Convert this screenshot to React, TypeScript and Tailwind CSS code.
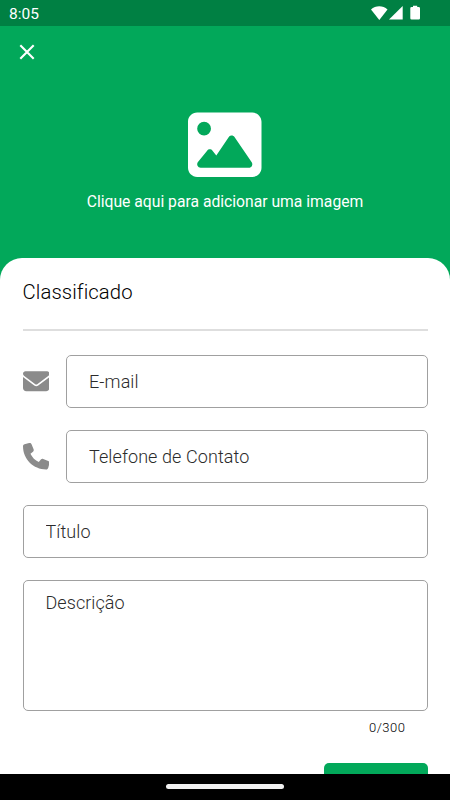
import { useState } from "react"
import type { ReactNode } from "react"
import clsx from "clsx"
import { FaEnvelope, FaImage, FaPhone } from "react-icons/fa6"

const MAX_DESCRIPTION = 300

function StatusBar() {
	return (
		<div className="flex h-[26px] shrink-0 items-center justify-between bg-[#008043] pr-[29px] pl-[9px] text-white">
			<span className="pt-[2px] text-[15.5px] leading-6">8:05</span>
			<svg width="50" height="16" viewBox="0 0 50 16" fill="currentColor">
				<path d="M0 4.5C4.6.2 11.9.2 16.5 4.5L8.3 15z" />
				<path d="M31.7 1v13.5H18z" />
				<path d="M42 2V.8h4.2V2h1.5q1.3 0 1.3 1.2v10.1q0 1.2-1.3 1.2h-7.1q-1.3 0-1.3-1.2V3.2q0-1.2 1.3-1.2z" />
			</svg>
		</div>
	)
}

function Field({ label, icon }: { label: string; icon?: ReactNode }) {
	return (
		<label className="mb-[22px] flex items-center">
			{icon && <span className="w-[43.5px] shrink-0 text-[#8b8b8b]">{icon}</span>}
			<input
				placeholder={label}
				className="h-[53px] w-full min-w-0 rounded-[5px] border border-[#a0a0a0] px-[22px] pb-[1px] text-lg font-light tracking-[0.09px] text-black outline-none placeholder:text-[#2b2b2b] placeholder:opacity-100"
			/>
		</label>
	)
}

export default function App() {
	const [description, setDescription] = useState("")

	return (
		<div className="flex h-[800px] w-[450px] flex-col overflow-hidden bg-[#02a85a] font-['Roboto',sans-serif]">
			<StatusBar />
			<header className="h-[232px] shrink-0 text-white">
				<button className="mt-[18px] ml-[19px] block size-4" aria-label="Fechar">
					<svg width="16" height="16" viewBox="0 0 16 16" fill="none" stroke="currentColor" strokeWidth="2.1">
						<path d="M1.3 1.3l13.4 13.4M14.7 1.3L1.3 14.7" />
					</svg>
				</button>
				<button className="mx-auto mt-[47.5px] flex flex-col items-center">
					<FaImage size={73.5} />
					<span className="mt-[9px] text-[15.7px] leading-6">Clique aqui para adicionar uma imagem</span>
				</button>
			</header>
			<main className="min-h-0 flex-1 overflow-hidden rounded-t-[22px] bg-white px-[22.5px]">
				<h1 className="pt-[19px] text-[20.3px] leading-[30px] font-light tracking-[0.1px] text-black">Classificado</h1>
				<hr className="mt-[22px] mb-[24px] border-t-2 border-[#dedede]" />
				<form>
					<Field label="E-mail" icon={<FaEnvelope size={26.5} />} />
					<Field label="Telefone de Contato" icon={<FaPhone size={26.5} />} />
					<Field label="Título" />
					<textarea
						placeholder="Descrição"
						maxLength={MAX_DESCRIPTION}
						value={description}
						onChange={(e) => setDescription(e.target.value)}
						className="block h-[131px] w-full resize-none rounded-[5px] border border-[#a0a0a0] px-[22px] pt-[8px] text-lg font-light tracking-[0.05px] text-black outline-none placeholder:text-[#2b2b2b] placeholder:opacity-100"
					/>
					<p
						className={clsx(
							"mt-[7px] pr-[22px] text-right text-[13px] leading-5 font-light tracking-[0.5px]",
							description.length >= MAX_DESCRIPTION ? "text-red-600" : "text-black"
						)}
					>
						{description.length}/{MAX_DESCRIPTION}
					</p>
					<button type="button" className="mt-[25px] ml-auto block h-[45px] w-[103.5px] rounded-[5px] bg-[#02a85a]" aria-label="Enviar" />
				</form>
			</main>
			<div className="flex h-[26px] shrink-0 justify-center bg-black pt-[10px]">
				<div className="h-[5px] w-[118px] rounded-full bg-[#f1f1f1]" />
			</div>
		</div>
	)
}
